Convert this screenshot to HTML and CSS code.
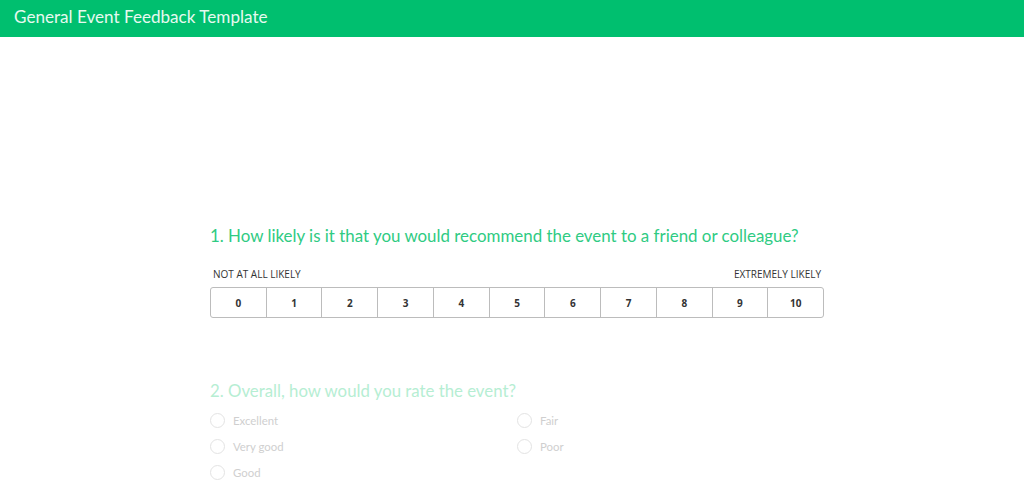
FILE: index.html
```html
<!DOCTYPE html>
<html>
<head>
<meta charset="utf-8">
<link rel="stylesheet" href="styles.css">
</head>
<body>
<header class="topbar">General Event Feedback Template</header>
<main class="survey">
  <section class="question q1">
    <h2 class="qtitle">1. How likely is it that you would recommend the event to a friend or colleague?</h2>
    <div class="scale-labels"><span>NOT AT ALL LIKELY</span><span>EXTREMELY LIKELY</span></div>
    <div class="scale">
      <div class="cell">0</div><div class="cell">1</div><div class="cell">2</div><div class="cell">3</div><div class="cell">4</div><div class="cell">5</div><div class="cell">6</div><div class="cell">7</div><div class="cell">8</div><div class="cell">9</div><div class="cell">10</div>
    </div>
  </section>
  <section class="question q2">
    <h2 class="qtitle faded">2. Overall, how would you rate the event?</h2>
    <div class="options">
      <div class="col">
        <label class="opt"><span class="radio"></span>Excellent</label>
        <label class="opt"><span class="radio"></span>Very good</label>
        <label class="opt"><span class="radio"></span>Good</label>
      </div>
      <div class="col">
        <label class="opt"><span class="radio"></span>Fair</label>
        <label class="opt"><span class="radio"></span>Poor</label>
      </div>
    </div>
  </section>
</main>
</body>
</html>
```

FILE: styles.css
```css
html, body { margin: 0; padding: 0; background: #fff; }
body { font-family: "Lato", "Liberation Sans", sans-serif; width: 1024px; height: 491px; overflow: hidden; }
.topbar {
  background: #00bf6f;
  color: #e6f9ef;
  height: 37px;
  box-sizing: border-box;
  padding: 5px 0 0 14px;
  font-size: 17.1px;
  line-height: 24px;
  font-weight: 400;
}
.survey { width: 614px; margin: 0 0 0 210px; padding-top: 186px; }
.qtitle {
  margin: 0;
  font-weight: 400;
  font-size: 16.9px;
  line-height: 26px;
  color: #2fcb83;
  white-space: nowrap;
}
.qtitle.faded { color: #b6eed3; font-size: 16.8px; }
.scale-labels {
  display: flex;
  justify-content: space-between;
  font-family: "Open Sans", "Liberation Sans", sans-serif;
  font-size: 10px;
  color: #333;
  margin-top: 18px;
  padding: 0 3px;
  line-height: 14px;
}
.scale {
  display: flex;
  margin-top: 6px;
  border: 1px solid #bcbcbc;
  border-radius: 3px;
  box-sizing: border-box;
  height: 31px;
}
.cell {
  flex: 1;
  display: flex;
  align-items: center;
  justify-content: center;
  font-family: "Open Sans", "Liberation Sans", sans-serif;
  font-size: 10px;
  font-weight: 700;
  color: #333;
  border-left: 1px solid #bcbcbc;
}
.cell:first-child { border-left: none; }
.q2 { margin-top: 60px; }
.options { display: flex; margin-top: 7px; }
.col { width: 307px; display: flex; flex-direction: column; gap: 8px; }
.opt {
  display: flex;
  align-items: center;
  font-size: 11.4px;
  color: #cfcfcf;
  height: 18px;
}
.radio {
  width: 13px;
  height: 13px;
  border: 1px solid #e3e3e3;
  border-radius: 50%;
  margin-right: 8px;
}
```
